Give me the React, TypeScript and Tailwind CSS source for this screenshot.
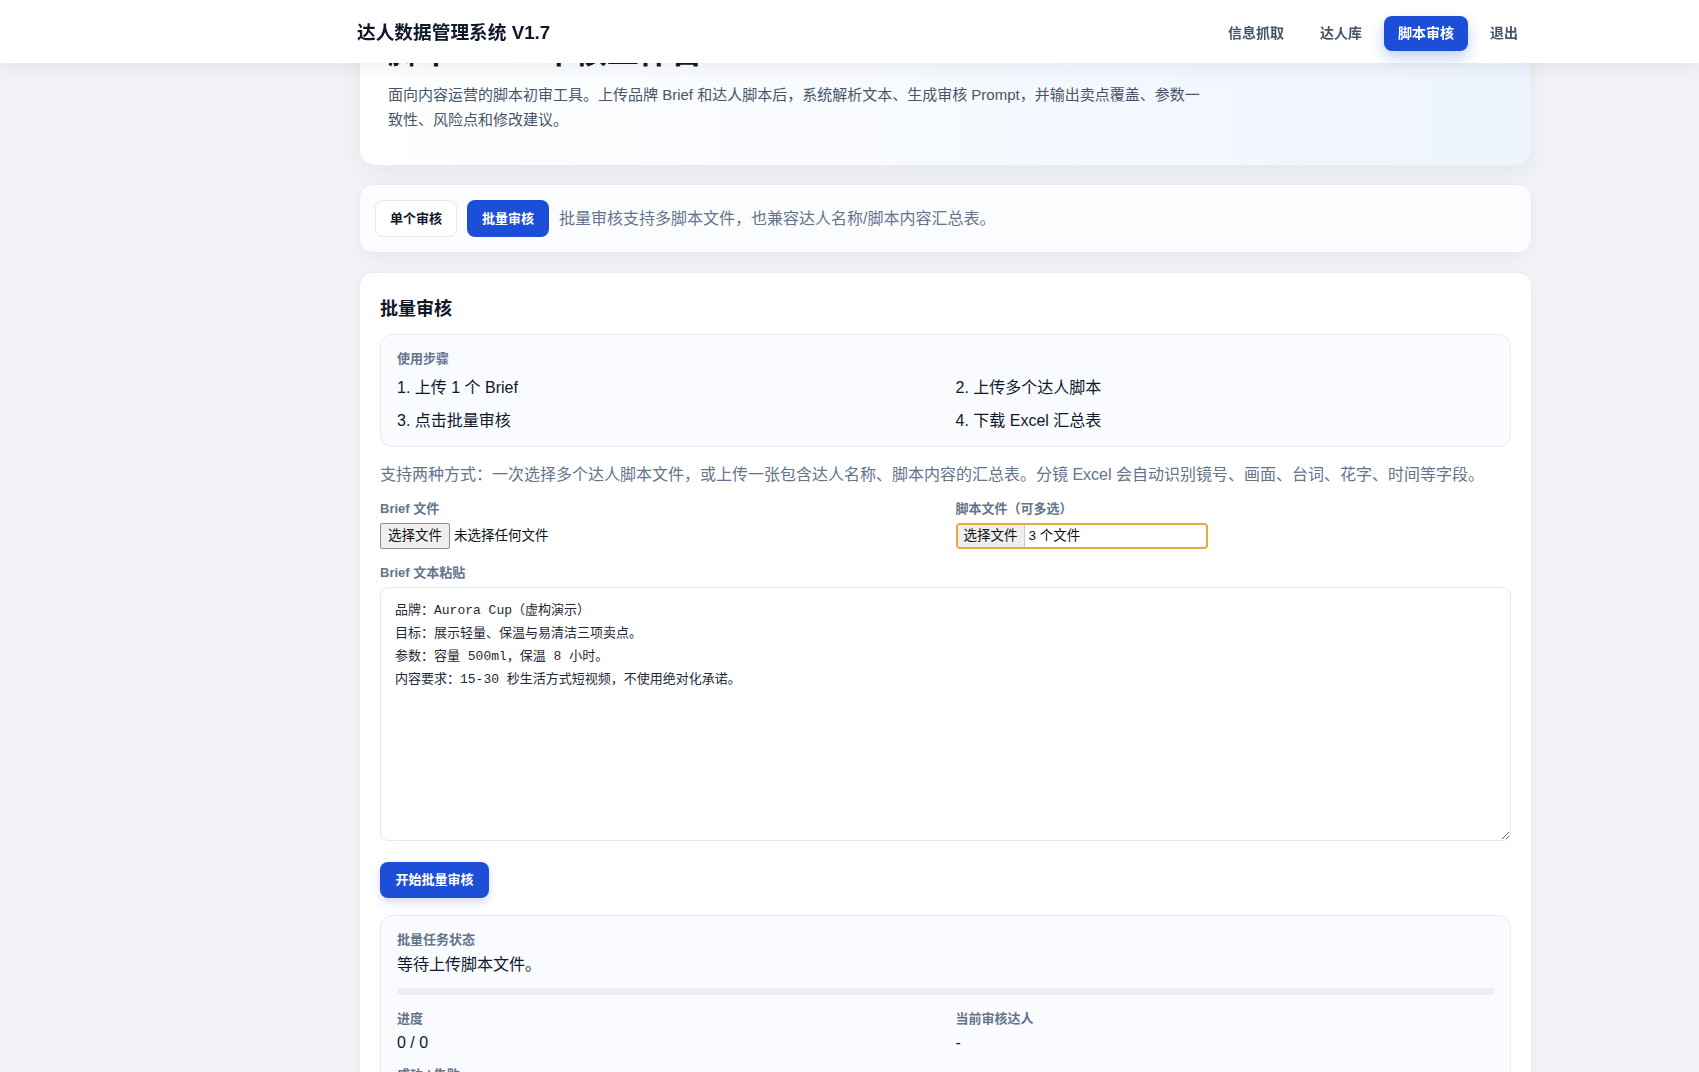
import React from "react";

const FONT = '"Liberation Sans", "Noto Sans CJK SC", sans-serif';

function FakeFile({ text, focused }: { text: string; focused?: boolean }) {
  if (focused) {
    return (
      <div className="flex h-[26px] w-[252px] items-stretch overflow-hidden rounded-[4px] border-2 border-[#e8a93e] bg-white text-[13.5px] text-[#111]">
        <span className="flex items-center border-r border-[#c8c8c8] bg-[#efefef] px-[6px]">选择文件</span>
        <span className="flex items-center pl-[4px]">{text}</span>
      </div>
    );
  }
  return (
    <div className="flex h-[26px] items-center text-[13.5px] text-[#111]">
      <span className="flex h-[26px] items-center rounded-[2px] border border-[#8f8f8f] bg-[#efefef] px-[7px]">选择文件</span>
      <span className="pl-[4px]">{text}</span>
    </div>
  );
}

export default function App() {
  const brief =
    "品牌：Aurora Cup（虚构演示）\n目标：展示轻量、保温与易清洁三项卖点。\n参数：容量 500ml，保温 8 小时。\n内容要求：15-30 秒生活方式短视频，不使用绝对化承诺。";
  return (
    <div className="h-[1072px] overflow-hidden bg-[#f1f3f7]" style={{ fontFamily: FONT }}>
      {/* sticky header overlaying scrolled content */}
      <header className="fixed left-0 right-0 top-0 z-10 h-[63px] bg-white shadow-[0_6px_18px_rgba(15,23,42,0.06)]">
        <div className="ml-[357px] flex h-full w-[1175px] items-center justify-between pt-[3px]">
          <div className="text-[18.7px] font-bold text-[#0f172a]">达人数据管理系统 V1.7</div>
          <nav className="flex items-center gap-2 text-[14px] font-bold">
            <span className="px-3.5 py-2 text-[#475569]">信息抓取</span>
            <span className="px-3.5 py-2 text-[#475569]">达人库</span>
            <span className="flex h-[35px] items-center rounded-[8px] bg-[#1d4ed8] px-3.5 text-white shadow-[0_6px_14px_rgba(29,78,216,0.28)]">脚本审核</span>
            <span className="px-3.5 py-2 text-[#475569]">退出</span>
          </nav>
        </div>
      </header>

      <main className="ml-[359px] flex w-[1173px] flex-col">
        {/* hero */}
        <section className="rounded-b-[16px] border border-t-0 border-[#e8ebf1] bg-gradient-to-r from-white to-[#eef4fe] px-7 pb-[33px] pt-[32px] shadow-[0_8px_24px_rgba(15,23,42,0.05)]">
          <h1 className="text-[32px] font-bold leading-[40px] text-[#0f172a]">脚本 Brief 审核工作台</h1>
          <p className="mt-[10px] max-w-[815px] text-[15px] leading-[25px] text-[#475569]">
            面向内容运营的脚本初审工具。上传品牌 Brief 和达人脚本后，系统解析文本、生成审核 Prompt，并输出卖点覆盖、参数一致性、风险点和修改建议。
          </p>
        </section>

        {/* mode switch */}
        <section className="mt-[18px] flex items-center gap-2.5 rounded-[14px] border border-[#e8ebf1] bg-[#fbfcfe] px-[15px] py-[15px] shadow-[0_6px_18px_rgba(15,23,42,0.04)]">
          <span className="flex h-[37px] w-[82px] items-center justify-center rounded-[8px] border border-[#e2e8f0] bg-white text-[13px] font-bold text-[#0f172a]">单个审核</span>
          <span className="flex h-[37px] w-[82px] items-center justify-center rounded-[8px] bg-[#1d4ed8] text-[13px] font-bold text-white">批量审核</span>
          <span className="text-[16px] text-[#64748b]">批量审核支持多脚本文件，也兼容达人名称/脚本内容汇总表。</span>
        </section>

        {/* main card */}
        <section className="mt-[19px] rounded-t-[14px] border border-b-0 border-[#e8ebf1] bg-white px-5 pt-[22px] pb-10 shadow-[0_6px_18px_rgba(15,23,42,0.04)]">
          <h2 className="text-[18px] font-bold leading-[28px] text-[#0f172a]">批量审核</h2>

          <div className="mt-[11px] rounded-[12px] border border-[#e8ebf1] bg-[#f9fbfe] px-4 pb-[13px] pt-[14px]">
            <div className="text-[13px] font-bold leading-[20px] text-[#64748b]">使用步骤</div>
            <div className="mt-[7px] grid grid-cols-2 gap-x-5 gap-y-[9px] text-[16px] leading-[24px] text-[#0f172a]">
              <div>1. 上传 1 个 Brief</div>
              <div>2. 上传多个达人脚本</div>
              <div>3. 点击批量审核</div>
              <div>4. 下载 Excel 汇总表</div>
            </div>
          </div>

          <p className="mt-[16px] text-[16px] leading-[24px] text-[#64748b]">
            支持两种方式：一次选择多个达人脚本文件，或上传一张包含达人名称、脚本内容的汇总表。分镜 Excel 会自动识别镜号、画面、台词、花字、时间等字段。
          </p>

          <div className="mt-[12px] grid grid-cols-2 gap-x-5">
            <div>
              <div className="text-[13px] font-bold leading-[20px] text-[#64748b]">Brief 文件</div>
              <div className="mt-[4px]">
                <FakeFile text="未选择任何文件" />
              </div>
            </div>
            <div>
              <div className="text-[13px] font-bold leading-[20px] text-[#64748b]">脚本文件（可多选）</div>
              <div className="mt-[4px]">
                <FakeFile text="3 个文件" focused />
              </div>
            </div>
          </div>

          <div className="mt-[14px] text-[13px] font-bold leading-[20px] text-[#64748b]">Brief 文本粘贴</div>
          <textarea
            className="mt-[4px] block h-[254px] w-full rounded-[8px] border border-[#e2e8f0] bg-white px-[14px] pt-[11px] text-[13px] leading-[23px] text-[#1f2937] outline-none"
            style={{ fontFamily: '"Liberation Mono", "Noto Sans CJK SC", monospace' }}
            defaultValue={brief}
          />

          <button className="mt-[21px] flex h-[36px] w-[109px] items-center justify-center rounded-[8px] bg-[#1d4ed8] text-[13px] font-bold text-white shadow-[0_4px_10px_rgba(29,78,216,0.2)]">
            开始批量审核
          </button>

          <div className="mt-[17px] rounded-[12px] border border-[#e8ebf1] bg-[#f9fbfe] px-4 pb-6 pt-[14px]">
            <div className="text-[13px] font-bold leading-[20px] text-[#64748b]">批量任务状态</div>
            <div className="mt-[2px] text-[16px] leading-[26px] text-[#0f172a]">等待上传脚本文件。</div>
            <div className="mt-[10px] h-[7px] w-full rounded-full bg-[#eceef3]" />
            <div className="mt-[14px] grid grid-cols-2 gap-x-5 gap-y-[10px]">
              <div>
                <div className="text-[13px] font-bold leading-[20px] text-[#64748b]">进度</div>
                <div className="mt-[2px] text-[16px] leading-[24px] text-[#0f172a]">0 / 0</div>
              </div>
              <div>
                <div className="text-[13px] font-bold leading-[20px] text-[#64748b]">当前审核达人</div>
                <div className="mt-[2px] text-[16px] leading-[24px] text-[#0f172a]">-</div>
              </div>
              <div>
                <div className="text-[13px] font-bold leading-[20px] text-[#64748b]">成功 / 失败</div>
                <div className="mt-[2px] text-[16px] leading-[24px] text-[#0f172a]">0 / 0</div>
              </div>
            </div>
          </div>
        </section>
      </main>
    </div>
  );
}
